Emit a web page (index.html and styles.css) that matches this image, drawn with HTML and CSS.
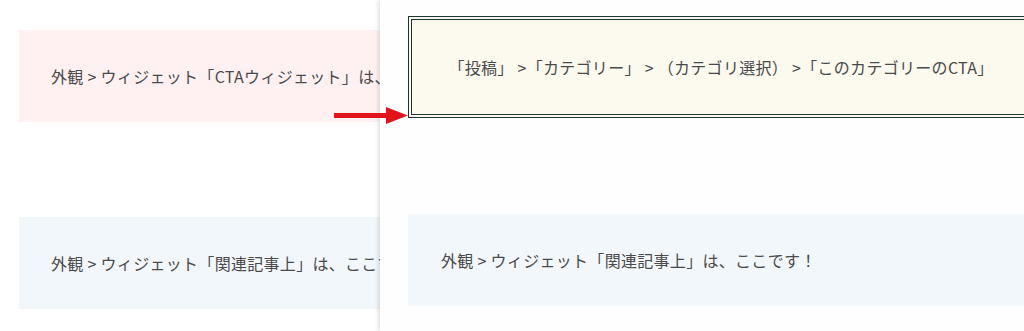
FILE: index.html
```html
<!DOCTYPE html>
<html>
    <head>
        <title>CTA widget</title>
        <link rel="stylesheet" href="styles.css">
    </head>
    <body>
        <div class="page">
            <div class="note pink">外観 &gt; ウィジェット「CTAウィジェット」は、ここです！</div>
            <div class="note blue">外観 &gt; ウィジェット「関連記事上」は、ここです！</div>
        </div>

        <!-- screenshot laid over the page -->
        <div class="panel">
            <div class="cta">「投稿」 &gt;「カテゴリー」 &gt; （カテゴリ選択） &gt;「このカテゴリーのCTA」</div>
            <div class="note blue">外観 &gt; ウィジェット「関連記事上」は、ここです！</div>
        </div>

        <svg class="arrow" width="78" height="20" viewBox="0 0 78 20">
            <rect x="2" y="8" width="54" height="5" fill="#e3131b"/>
            <polygon points="54,2 76,10.5 54,19" fill="#e3131b"/>
        </svg>
    </body>
</html>
```

FILE: styles.css
```css
body
{
    margin:0;
    background-color:#ffffff;
    overflow:hidden;
    height:331px;
    position:relative;
    font-family:"Noto Sans CJK JP", "Noto Sans", sans-serif;
    font-size:16px;
    letter-spacing:0.3px;
    color:#4a4a4a;
}
.page
{
    padding:30px 0 0 19px;
    display:flex;
    flex-direction:column;
    gap:95px;
}
.note
{
    width:600px;
    padding:34px 32px;
    line-height:24px;
    white-space:nowrap;
}
.pink
{
    background-color:#fff1f1;
}
.blue
{
    background-color:#f2f7fc;
}
.panel
{
    position:absolute;
    left:380px;
    top:0;
    bottom:0;
    width:626px;
    padding:16px 28px;
    background-color:#fefefe;
    box-shadow:-2px 0 4px rgba(0,0,0,0.12);
    display:flex;
    flex-direction:column;
    gap:96px;
}
.panel .note
{
    width:auto;
    padding:34px 33px;
}
.cta
{
    border:4px double #1f3533;
    background-color:#fcf9ef;
    padding:35px 20px;
    line-height:24px;
    text-align:center;
    white-space:nowrap;
}
.arrow
{
    position:absolute;
    left:332px;
    top:105px;
}
```
